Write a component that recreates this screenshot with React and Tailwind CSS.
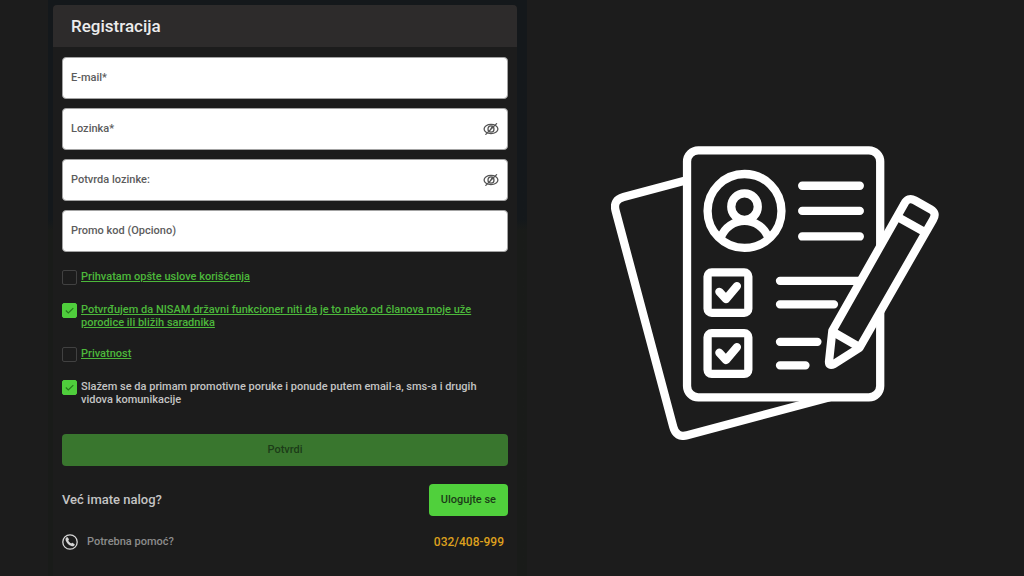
import { useState } from "react";

function EyeOff() {
  return (
    <svg viewBox="0 0 16 14" className="h-3.5 w-4" fill="none" stroke="#555" strokeWidth="1.3" strokeLinecap="round">
      <ellipse cx="8" cy="7" rx="6.9" ry="4.7" />
      <ellipse cx="8" cy="7" rx="3" ry="3.2" />
      <path d="M13.6 1.6 2.8 12.4M9.3 4.6 6.6 9" />
    </svg>
  );
}

function Field({ id, label, type = "text", secret = false }) {
  const [shown, setShown] = useState(false);
  return (
    <div className="relative flex h-[42px] items-center rounded border border-[#a3a3a3] bg-white pr-2">
      <input
        id={id}
        type={secret && shown ? "text" : type}
        placeholder=" "
        className="peer h-full min-w-0 flex-1 rounded bg-transparent px-2 text-[11px] text-[#333] outline-none"
      />
      <label
        htmlFor={id}
        className="pointer-events-none invisible absolute inset-y-0 left-2 flex items-center text-[11px] font-medium text-[#5c5c5c] peer-placeholder-shown:visible"
      >
        {label}
      </label>
      {secret && (
        <button type="button" aria-label="Prikaži lozinku" onClick={() => setShown(!shown)}>
          <EyeOff />
        </button>
      )}
    </div>
  );
}

function Check({ id, checked = false, link = false, children }) {
  return (
    <div className="flex items-start gap-1">
      <span className="relative size-[15px] shrink-0">
        <input
          id={id}
          type="checkbox"
          defaultChecked={checked}
          className="peer block size-[15px] appearance-none rounded-xs border border-[#414141] checked:border-[#4fce3c] checked:bg-[#4fce3c]"
        />
        <svg viewBox="0 0 15 15" className="pointer-events-none absolute inset-0 hidden size-[15px] peer-checked:block" fill="none" stroke="#257a1c" strokeWidth="1.2">
          <path d="m3.8 7.5 2.5 2.4 5-4.8" />
        </svg>
      </span>
      <label htmlFor={id} className="text-[11px] leading-[13px] font-medium text-[#c4c4c4]">
        {link ? <a href="#uslovi" className="text-[#4cb83b] underline">{children}</a> : children}
      </label>
    </div>
  );
}

function PhoneIcon() {
  return (
    <svg viewBox="0 0 16 16" className="size-4 shrink-0">
      <circle cx="8" cy="8" r="7.2" fill="none" stroke="#d6d6d6" strokeWidth="1.3" />
      <path fill="#d6d6d6" d="M4.4 3.5c.5-.5 1.1-.5 1.4 0l1 1.6c.3.5.1.9-.5 1.4.5 1.2 1.700 2.500 3 3 .5-.6.9-.8 1.400-.5l1.600 1c.5.3.5.9 0 1.400-.7.8-1.700 1.100-2.900.7-2.400-.8-4.800-3.200-5.700-5.700-.4-1.200-.1-2.200.7-2.900z" />
    </svg>
  );
}

function FormIllustration() {
  return (
    <svg viewBox="30 45 990 888" className="w-[66%]" fill="none" stroke="white" strokeWidth="25" strokeLinecap="round" strokeLinejoin="round" role="img" aria-label="Obrazac i olovka">
      <path strokeLinecap="butt" d="M255 149 68 199Q35 208 44 241L218 893Q227 927 260 918L690 803" />
      <rect x="259.500" y="58" width="583" height="745.500" rx="34" fill="#1c1c1c" />
      <circle cx="433" cy="241" r="111.500" />
      <circle cx="433" cy="228" r="40" />
      <path strokeLinecap="butt" d="M362 320A76 76 0 0 1 504 320" />
      <path d="M607 165H781M607 241H781M607 318H781M540 452H780M540 523H703M540 636H653M540 707H617" />
      <rect x="321.500" y="426.500" width="123" height="122" rx="12.500" />
      <rect x="321.500" y="610" width="123" height="123" rx="12.500" />
      <path d="m357 485 20 22 33-39M357 669l20 22 33-39" />
      <path fill="#1c1c1c" d="M698 603 915 220Q926 198 947 209L995 236Q1014 247 1002 267L780 654 703 703Q687 711 688 695Z" />
      <path strokeLinecap="butt" d="M900 262 973 303M700 606 776 650" />
    </svg>
  );
}

export default function App() {
  return (
    <main className="grid min-h-screen grid-cols-[527fr_497fr] bg-[#1c1c1c] font-['Roboto',sans-serif]">
      <section className="ml-12 bg-linear-to-b from-[#14181b] from-38% to-[#191b19] to-40% pt-[5px] pr-2.5 pl-[5px]">
        <form className="min-h-full rounded-t bg-[#1c1c1c]" onSubmit={(e) => e.preventDefault()}>
          <h1 className="flex h-[42px] items-center rounded-t bg-[#2d2b2b] px-[18px] pt-0.5 text-[17px] font-medium text-[#ececec]">Registracija</h1>
          <div className="px-[9px] pt-2.5">
            <div className="flex flex-col gap-[9px]">
              <Field id="email" label="E-mail*" type="email" />
              <Field id="password" label="Lozinka*" type="password" secret />
              <Field id="confirm" label="Potvrda lozinke:" type="password" secret />
              <Field id="promo" label="Promo kod (Opciono)" />
            </div>
            <div className="mt-[18px] flex flex-col gap-[18px]">
              <Check id="terms" link>Prihvatam opšte uslove korišćenja</Check>
              <Check id="official" link checked>
                Potvrđujem da NISAM državni funkcioner niti da je to neko od članova moje uže porodice ili bližih saradnika
              </Check>
              <Check id="privacy" link>Privatnost</Check>
              <Check id="promotions" checked>
                Slažem se da primam promotivne poruke i ponude putem email-a, sms-a i drugih vidova komunikacije
              </Check>
            </div>
            <button type="submit" className="mt-7 h-8 w-full rounded bg-[#39762e] text-[11px] font-medium text-[#1c3c18]">Potvrdi</button>
            <div className="mt-[18px] flex items-center justify-between">
              <p className="text-[13px] font-medium text-[#c4c4c4]">Već imate nalog?</p>
              <button type="button" className="h-8 rounded bg-[#50d03c] px-3 text-[11px] font-medium text-[#1c3c18]">Ulogujte se</button>
            </div>
            <div className="mt-[18px] flex items-center gap-[9px] pr-1">
              <PhoneIcon />
              <p className="text-[11px] font-medium text-[#8c8c8c]">Potrebna pomoć?</p>
              <a href="tel:032408999" className="ml-auto text-xs font-medium text-[#dda01e]">032/408-999</a>
            </div>
          </div>
        </form>
      </section>
      <section className="flex items-center justify-center pt-2.5">
        <FormIllustration />
      </section>
    </main>
  );
}
